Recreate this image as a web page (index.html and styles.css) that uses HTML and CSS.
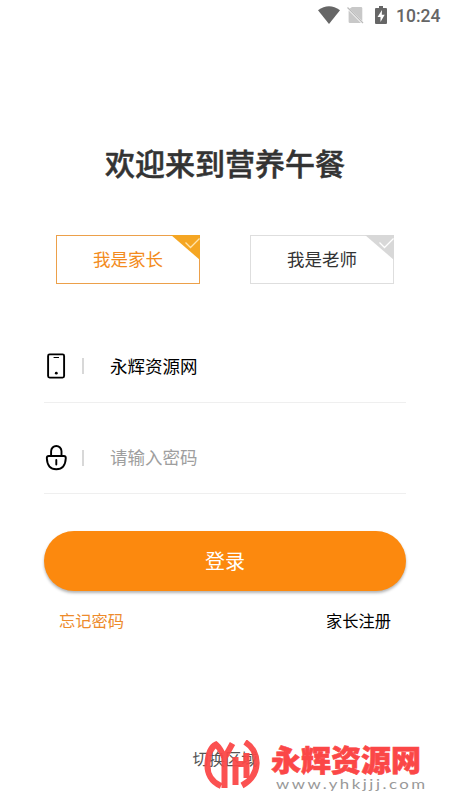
FILE: index.html
```
<!DOCTYPE html>
<html lang="zh-CN">
<head>
<meta charset="utf-8">
<title>登录</title>
<link rel="stylesheet" href="styles.css">
</head>
<body>
<header class="status">
  <svg class="wifi" width="22" height="18" viewBox="0 0 22 18"><path d="M0 4.200Q11-3.800 22 4.200L11 18Z"/></svg>
  <svg class="sim" width="17" height="18" viewBox="0 0 17 18"><path d="M5 1h9q1.300 0 1.300 1.300V15L2.500 2.700ZM1.600 4.500 14 17H2.900q-1.300 0-1.300-1.300Z"/><path class="slash" d="M.5 1.500 16 17"/></svg>
  <svg class="battery" width="12" height="18" viewBox="0 0 12 18"><path fill-rule="evenodd" d="M4 0h4v2h3q1 0 1 1v14q0 1-1 1H1q-1 0-1-1V3q0-1 1-1h3ZM7 4 2.500 11H5.500V16L9.700 8.700H6.800Z"/></svg>
  <span class="clock">10:24</span>
</header>
<main>
  <h1>欢迎来到营养午餐</h1>
  <div class="roles">
    <button class="role active">我是家长<svg class="corner" width="29" height="25" viewBox="0 0 29 25"><path class="fold" d="M0 0H29V25Z"/><path class="tick" d="M14.500 7.500 19.500 12.500 28.500 3.500"/></svg></button>
    <button class="role">我是老师<svg class="corner" width="29" height="25" viewBox="0 0 29 25"><path class="fold" d="M0 0H29V25Z"/><path class="tick" d="M14.500 7.500 19.500 12.500 28.500 3.500"/></svg></button>
  </div>
  <div class="field">
    <svg class="icon" width="24" height="28" viewBox="0 0 24 28"><rect x="4.100" y="2.400" width="16" height="23.200" rx="1.500"/><path class="thin" d="M10 5.500h4.600"/><circle cx="12.300" cy="21.200" r="1.400"/></svg>
    <i class="bar"></i><span>永辉资源网</span>
  </div>
  <div class="field password">
    <svg class="icon" width="24" height="28" viewBox="0 0 24 28"><path d="M7.100 12V7.200a5.200 5.200 0 0 1 10.400 0V12M4.800 12h15q2 0 2 2-.5 11.300-9.500 11.300T2.800 14q0-2 2-2ZM12.300 16v4.500"/></svg>
    <i class="bar"></i><span class="placeholder">请输入密码</span>
  </div>
  <button class="login">登录</button>
  <nav><a class="forgot">忘记密码</a><a>家长注册</a></nav>
</main>
<footer>切换区域</footer>
<div class="watermark">
  <svg width="56" height="50" viewBox="0 0 56 50"><path d="M17 46C7 42 3 33 3.500 24 4 14 7 7 12 4.500 15 7 18 12 20.500 18L28.500 3.500M20.500 17V48M31.500 45V17M31.500 24H42.500M42.500 13V38"/><path d="M41 2C57 12 57 35 38 45.500"/></svg>
  <div class="brand"><strong>永辉资源网</strong><span>www.yhkjjj.com</span></div>
</div>
</body>
</html>
```

FILE: styles.css
```
* { box-sizing: border-box; }
body {
  position: relative;
  display: flex;
  flex-direction: column;
  width: 450px;
  height: 800px;
  margin: 0;
  overflow: hidden;
  background: #fff;
  color: #000;
  font-family: "Noto Sans CJK SC", sans-serif;
}
button { padding: 0; font-family: inherit; }
.status {
  display: flex;
  height: 32px;
  padding: 6px 8px 0 318px;
  fill: #666;
  flex-shrink: 0;
}
.sim { margin-left: 7px; fill: #c8c8c8; }
.slash { stroke: #bbb; stroke-width: 1.2; }
.battery { margin-left: 11px; }
.clock {
  margin-left: 9px;
  color: #666;
  font: 500 17.5px/20px Roboto, sans-serif;
  white-space: nowrap;
}
main { padding: 0 44px; }
h1 {
  margin: 108px 0 0;
  color: #333;
  font-size: 30px;
  font-weight: 500;
  line-height: 44px;
  text-align: center;
  -webkit-text-stroke: .5px #333;
}
.roles { display: flex; gap: 50px; padding: 51px 12px 0; }
.role {
  position: relative;
  width: 144px;
  height: 49px;
  padding-bottom: 2px;
  border: 1px solid #dedede;
  background: #fff;
  color: #333;
  font-size: 17.5px;
  line-height: 45px;
}
.role.active { border-color: #eca04a; color: #f38b20; }
.corner { position: absolute; top: -1px; right: -1px; }
.fold { fill: #d8d8d8; }
.active .fold { fill: #f5a623; }
.tick { fill: none; stroke: #fff; stroke-width: 1.3; }
.active .tick { stroke: #ffe4ac; }
.field {
  display: flex;
  align-items: center;
  height: 73px;
  margin-top: 46px;
  border-bottom: 1px solid #efefef;
  font-size: 17.5px;
}
.field span { padding-bottom: 2px; }
.password { height: 72px; margin-top: 19px; }
.icon { fill: none; stroke: #000; stroke-width: 1.9; stroke-linecap: round; }
.thin { stroke-width: 1; }
.icon circle { fill: #000; stroke: none; }
.bar { width: 2px; height: 16px; margin: 0 26px 0 14px; background: #d8d8d8; }
.placeholder { color: #9e9e9e; }
.login {
  display: block;
  width: 362px;
  height: 60px;
  margin-top: 37px;
  padding-bottom: 2px;
  border: 0;
  border-radius: 30px;
  background: #fc890e;
  box-shadow: 0 2px 3px rgba(0, 0, 0, .3);
  color: #fff;
  font-size: 20px;
}
nav {
  display: flex;
  justify-content: space-between;
  padding: 17px 15px 0;
  font-size: 16.25px;
  line-height: 24px;
}
.forgot { color: #ed8b2c; }
footer {
  margin-top: 114px;
  color: #555;
  font-size: 16.25px;
  line-height: 24px;
  text-align: center;
}
.watermark {
  position: absolute;
  top: 740px;
  left: 204px;
  display: flex;
}
.watermark svg { fill: none; stroke: #fb4747; stroke-width: 6; opacity: .94; }
.brand {
  display: flex;
  flex-direction: column;
  margin-left: 11px;
  white-space: nowrap;
}
.brand strong {
  margin-top: 3px;
  color: #fb4747;
  font-size: 30px;
  font-weight: 900;
  line-height: 31px;
  -webkit-text-stroke: .6px #fb4747;
}
.brand span {
  width: 120px;
  margin: 1px 0 0 5px;
  color: #999;
  font: 14px/18px Lato, sans-serif;
  letter-spacing: 2.1px;
  transform: scaleX(1.2);
  transform-origin: left;
}
```
